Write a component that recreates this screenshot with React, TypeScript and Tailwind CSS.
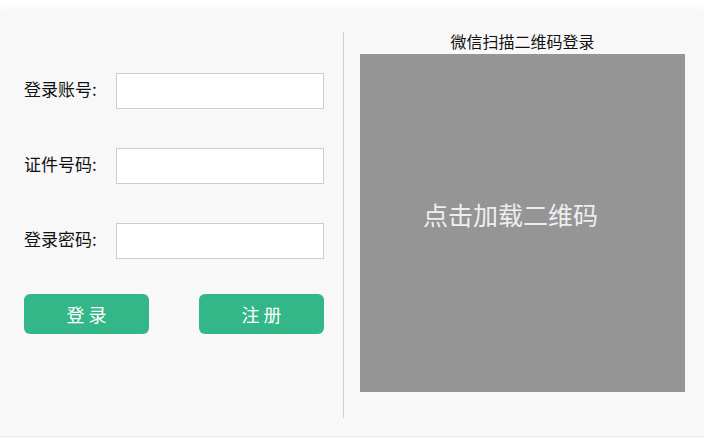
const fields = ["登录账号", "证件号码", "登录密码"];

const App = () => {
  return (
    <div
      className="w-[704px] h-[438px] bg-white overflow-hidden"
      style={{ fontFamily: '"Noto Sans CJK SC", "Noto Sans", sans-serif' }}
    >
      <div className="mt-3 h-[425px] bg-[#f8f8f8] border-b border-[#e9e9e9] shadow-[0_-3px_8px_rgba(0,0,0,0.05)] flex">
        {/* 左侧：账号登录 */}
        <div className="w-[344px] shrink-0 mt-5 h-[386px] border-r border-[#d0d0d0] pl-6">
          <div className="pt-[41px] flex flex-col gap-[39px]">
            {fields.map((f) => (
              <div key={f} className="flex items-center h-9">
                <span className="w-[92px] shrink-0 text-[17px] text-[#111] leading-none -mt-[5px]">{f}:</span>
                <input
                  type={f === "登录密码" ? "password" : "text"}
                  className="w-[208px] shrink-0 h-9 bg-white border border-[#cccccc] outline-none px-2 text-sm"
                />
              </div>
            ))}
          </div>
          <div className="mt-[35px] flex justify-between w-[300px]">
            <button className="w-[125px] h-10 rounded-[6px] bg-[#33b788] text-white text-lg tracking-[4px] pl-1">
              登录
            </button>
            <button className="w-[125px] h-10 rounded-[6px] bg-[#33b788] text-white text-lg tracking-[4px] pl-1">
              注册
            </button>
          </div>
        </div>

        {/* 右侧：微信扫码 */}
        <div className="flex-1 pt-[18px] flex flex-col items-start pl-4">
          <div className="w-[325px] text-center text-base leading-[22px] text-[#111] mb-[2px]">
            微信扫描二维码登录
          </div>
          <div className="w-[325px] h-[338px] bg-[#959595] flex items-center justify-center pr-6 cursor-pointer">
            <span className="text-[25px] text-[#eeeeee] -mt-4">点击加载二维码</span>
          </div>
        </div>
      </div>
    </div>
  );
};

export default App;
